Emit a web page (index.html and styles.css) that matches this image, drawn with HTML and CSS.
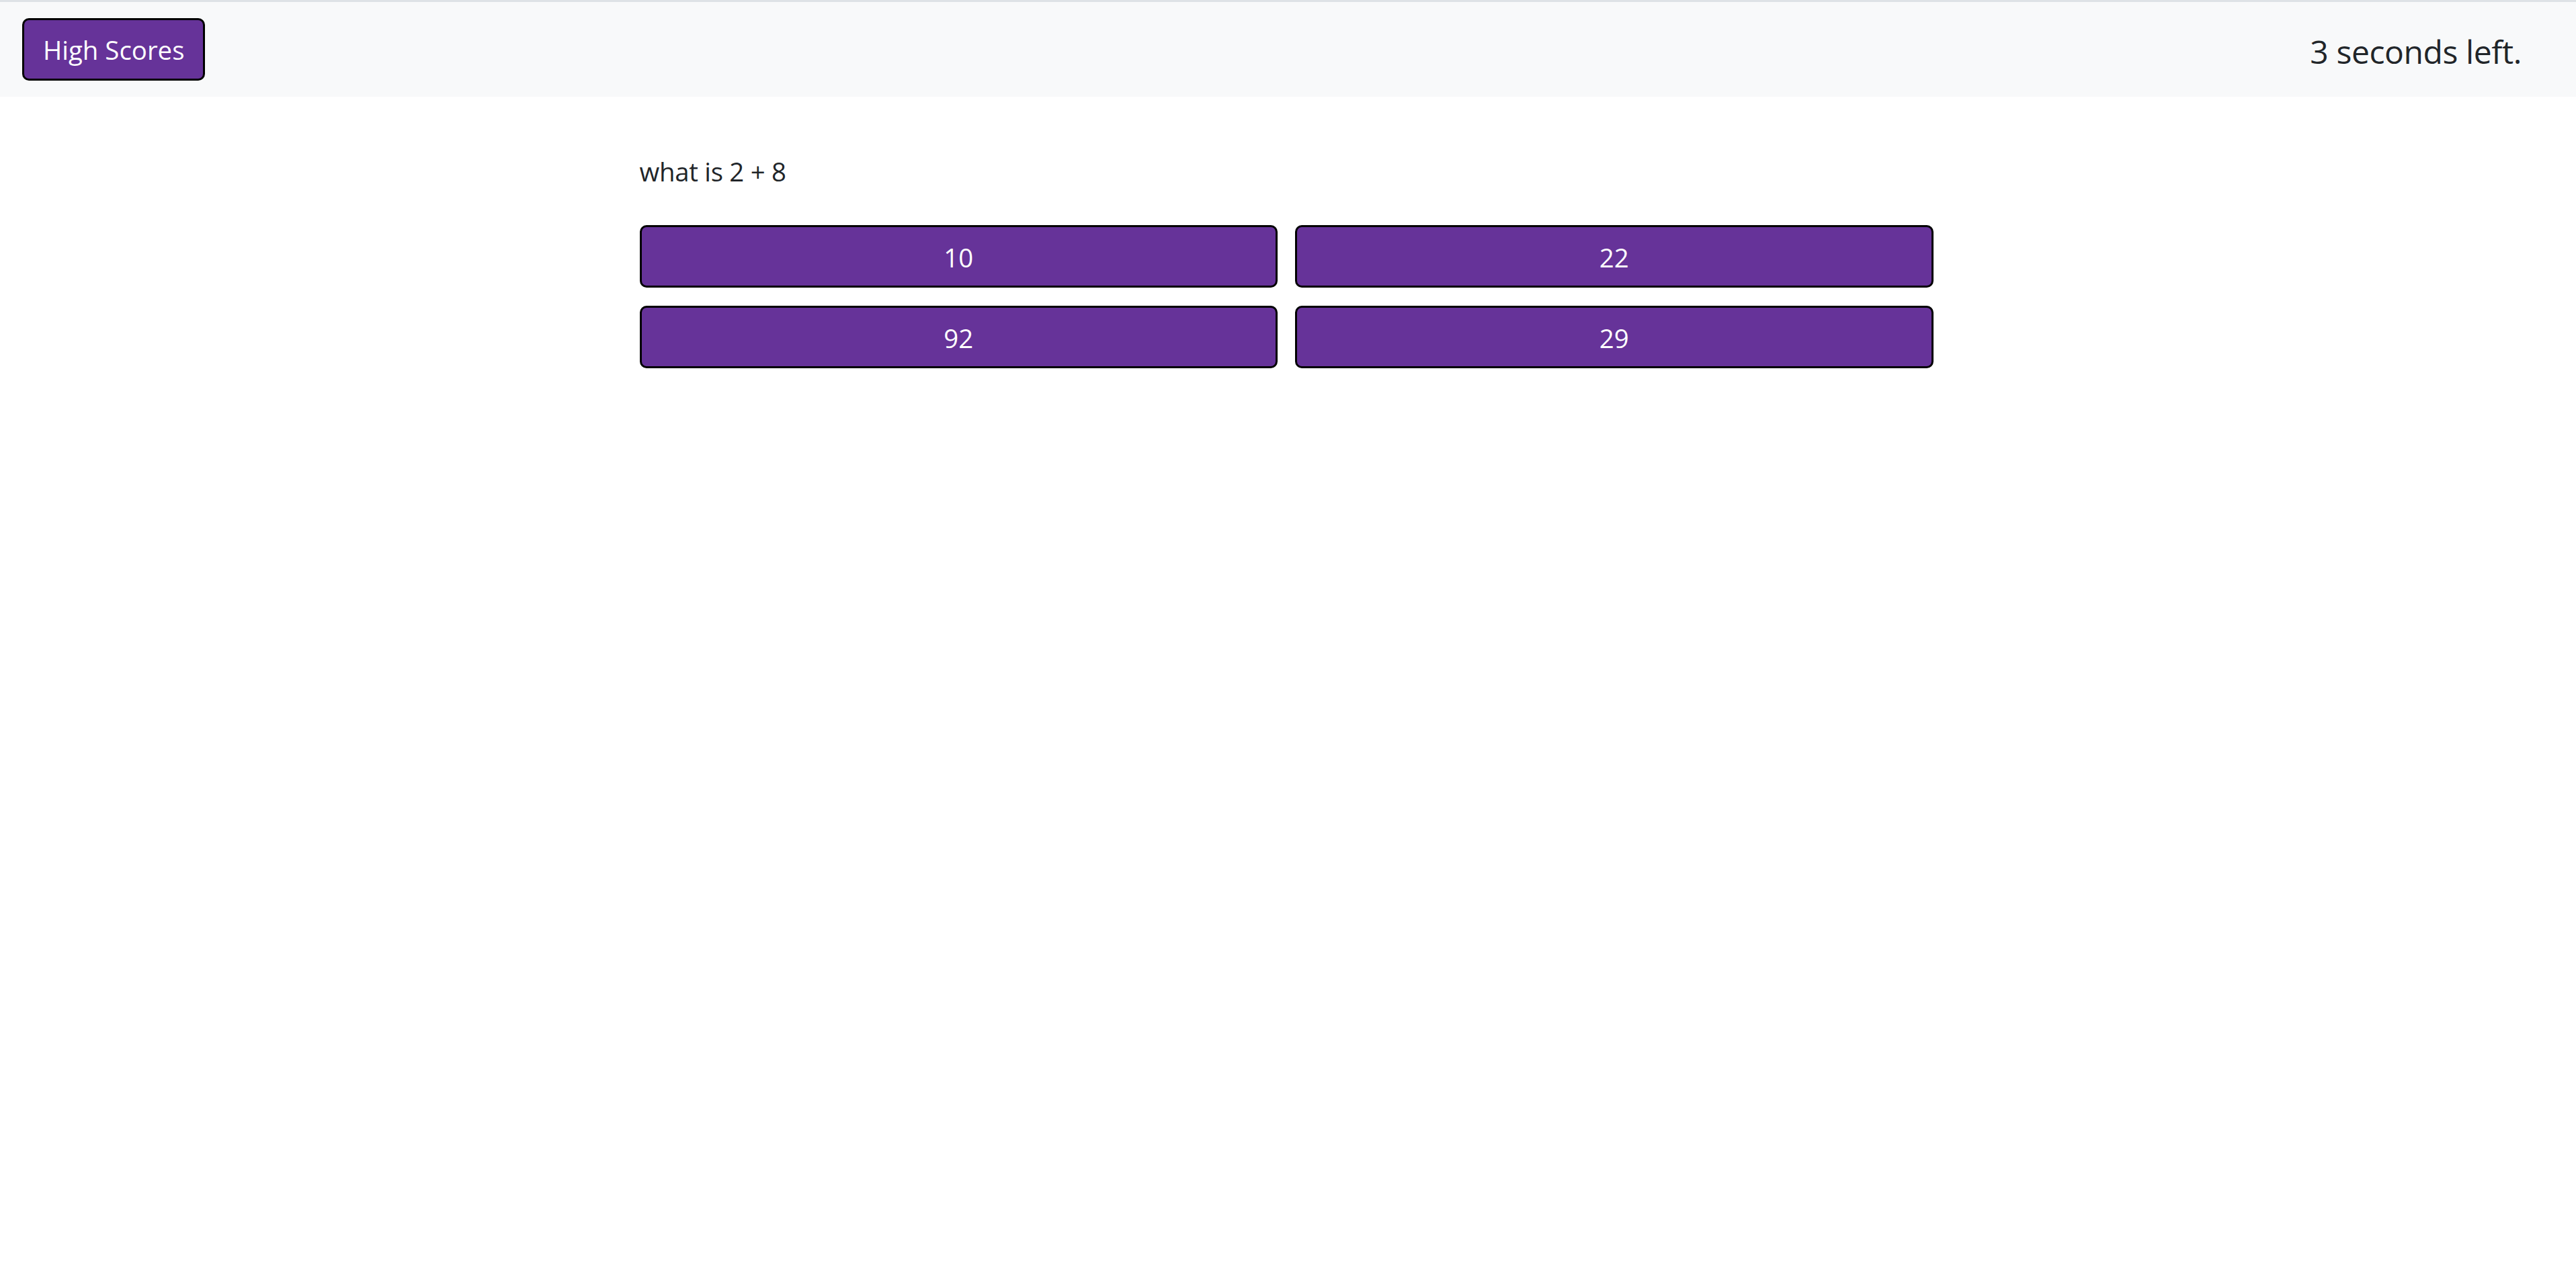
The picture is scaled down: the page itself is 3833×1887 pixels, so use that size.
FILE: index.html
```html
<!DOCTYPE html>
<html lang="en">
<head>
<meta charset="utf-8">
<title>Quiz</title>
<link rel="stylesheet" href="styles.css">
</head>
<body>
<header class="topbar">
  <button class="btn btn-scores" type="button">High Scores</button>
  <div class="timer">3 seconds left.</div>
</header>
<main class="quiz">
  <p class="question">what is 2 + 8</p>
  <div class="answers">
    <button class="btn btn-answer" type="button">10</button>
    <button class="btn btn-answer" type="button">22</button>
    <button class="btn btn-answer" type="button">92</button>
    <button class="btn btn-answer" type="button">29</button>
  </div>
</main>
</body>
</html>
```

FILE: styles.css
```css
html, body {
  margin: 0;
  padding: 0;
  background: #ffffff;
}

body {
  font-family: "Open Sans", "Noto Sans", "Liberation Sans", sans-serif;
  color: #212529;
  font-size: 38.4px;
  line-height: 1.5;
}

.topbar {
  border-top: 3px solid #dee2e6;
  background: #f8f9fa;
  height: 141px;
  display: flex;
  align-items: center;
  justify-content: space-between;
  padding: 0 81px 0 33px;
}

.btn {
  font-family: inherit;
  font-size: 38.4px;
  line-height: 1.5;
  color: #ffffff;
  background: #663399;
  border: 3px solid #000000;
  border-radius: 10px;
  cursor: pointer;
  margin: 0;
}

.btn-scores {
  padding: 16px 28px 14px 28px;
}

.timer {
  font-size: 48px;
  line-height: 1.2;
  letter-spacing: -0.4px;
  padding-top: 6px;
}

.quiz {
  width: 1925px;
  margin-left: calc(50% - 965px);
}

.question {
  margin: 83px 0 50px 0;
  letter-spacing: -0.3px;
}

.answers {
  display: grid;
  grid-template-columns: 1fr 1fr;
  gap: 27px 26px;
}

.btn-answer {
  padding: 17px 20px 12.4px 20px;
  display: block;
  width: 100%;
}
```
